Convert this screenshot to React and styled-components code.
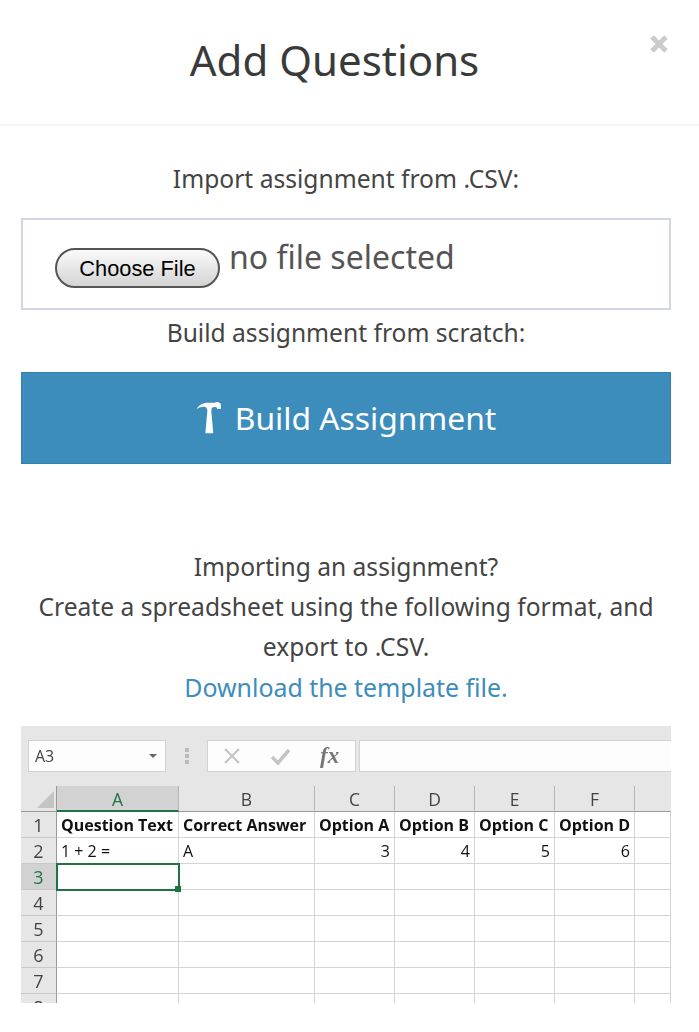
import React from 'react';
import styled, { createGlobalStyle } from 'styled-components';

const GlobalStyle = createGlobalStyle`
    html, body {
        margin: 0;
        padding: 0;
        background: #fff;
    }
    * {
        box-sizing: border-box;
    }
`;

const Modal = styled.div`
    width: 699px;
    height: 1032px;
    overflow: hidden;
    font-family: "Noto Sans", "Open Sans", sans-serif;
    color: #444;
`;

const Header = styled.header`
    position: relative;
    height: 126px;
    border-bottom: 2px solid #f4f4f4;
    padding: 30px 30px 0 0;
    text-align: center;
`;

const Title = styled.h1`
    margin: 0;
    font-size: 42px;
    line-height: 60px;
    font-weight: 400;
    color: #3a3a3a;
`;

const Close = styled.span`
    position: absolute;
    top: 34px;
    right: 30px;
    width: 20px;
    height: 20px;
    color: #ccc;
`;

const Body = styled.div`
    padding: 33px 28px 0 21px;
    display: flex;
    flex-direction: column;
`;

const Label = styled.p`
    margin: 0;
    text-align: center;
    font-size: ${p => p.$link ? '24.9px' : '24.6px'};
    line-height: 40px;
    color: ${p => p.$link ? '#3c8dbc' : '#444'};
`;

const FileBox = styled.div`
    margin: 19px 0 3px;
    height: 92px;
    border: 2px solid #d2d6e3;
    padding: 15px 0 0 32px;
    display: flex;
    align-items: flex-start;
    gap: 9px;
`;

const ChooseButton = styled.div`
    margin-top: 13px;
    width: 165px;
    height: 40px;
    border: 2px solid #555;
    border-radius: 20px;
    background: linear-gradient(#fafafa, #d4d4d4);
    color: #000;
    font-family: "Liberation Sans", Arial, sans-serif;
    font-size: 21.8px;
    line-height: 38px;
    text-align: center;
`;

const NoFile = styled.span`
    font-size: 32px;
    line-height: 44px;
    color: #555;
`;

const BuildButton = styled.div`
    margin-top: 19px;
    height: 92px;
    padding-bottom: 2px;
    background: #3c8dbc;
    border: 1px solid #367fa9;
    color: #fff;
    display: flex;
    align-items: center;
    justify-content: center;
    gap: 14px;
    font-size: 31.8px;
`;

const Intro = styled.div`
    margin-top: 83px;
`;

const Sheet = styled.div`
    margin-top: 19px;
    height: 277px;
    overflow: hidden;
    background: #e6e6e6;
    font-family: "Open Sans", "Noto Sans", sans-serif;
    color: #222;
    filter: blur(0.3px);
`;

const FormulaBar = styled.div`
    height: 60px;
    padding: 14px 0 14px 7px;
    display: flex;
    align-items: stretch;
`;

const InputBox = styled.div`
    background: #fdfdfd;
    border: 1px solid #d2d2d2;
    display: flex;
    align-items: center;
`;

const NameBox = styled(InputBox)`
    width: 138px;
    padding: 0 8px 0 6px;
    justify-content: space-between;
    font-size: 16px;
    color: #444;
`;

const Caret = styled.i`
    width: 0;
    height: 0;
    border-left: 4px solid transparent;
    border-right: 4px solid transparent;
    border-top: 4px solid #666;
`;

const Dots = styled.div`
    width: 41px;
    display: flex;
    flex-direction: column;
    align-items: center;
    justify-content: center;
    gap: 2px;
    i {
        width: 4px;
        height: 4px;
        background: #bbb;
    }
`;

const FnBox = styled(InputBox)`
    width: 149px;
    padding-left: 15px;
    gap: 30px;
    color: #c4c4c4;
`;

const Fx = styled.span`
    font-family: "Liberation Serif", serif;
    font-style: italic;
    font-weight: 700;
    font-size: 23px;
    color: #777;
`;

const FormulaInput = styled(InputBox)`
    flex: 1;
    margin-left: 3px;
    border-right: 0;
`;

const Grid = styled.div`
    display: grid;
    grid-template-columns: 36px 122px 136px 80px 80px 80px 80px 1fr;
    grid-auto-rows: 26px;
`;

const Corner = styled.div`
    background: #e6e6e6;
    border-bottom: 1px solid #9a9a9a;
    border-right: 1px solid #9a9a9a;
    position: relative;
    &::after {
        content: "";
        position: absolute;
        right: 2px;
        bottom: 3px;
        border-style: solid;
        border-width: 0 0 17px 17px;
        border-color: transparent transparent #c4c4c4 transparent;
    }
`;

const ColHead = styled.div`
    background: ${p => p.$active ? '#d2d2d2' : '#e6e6e6'};
    border-right: 1px solid ${p => p.$last ? 'transparent' : '#b5b5b5'};
    border-bottom: ${p => p.$active ? '2px solid #217346' : '1px solid #9a9a9a'};
    color: ${p => p.$active ? '#217346' : '#444'};
    font-size: 17.5px;
    line-height: 26px;
    text-align: center;
`;

const RowHead = styled.div`
    background: ${p => p.$active ? '#d2d2d2' : '#e6e6e6'};
    border-right: 1px solid #9a9a9a;
    border-bottom: 1px solid #c8c8c8;
    color: ${p => p.$active ? '#217346' : '#444'};
    font-size: 18px;
    line-height: 26px;
    text-align: center;
`;

const Cell = styled.div`
    position: relative;
    background: #fff;
    border-right: 1px solid #d4d4d4;
    border-bottom: 1px solid #d4d4d4;
    padding: 0 4px;
    font-size: 16px;
    line-height: 26px;
    font-weight: ${p => p.$bold ? 700 : 400};
    color: #111;
    text-align: ${p => p.$num ? 'right' : 'left'};
    white-space: nowrap;
    overflow: ${p => p.$selected ? 'visible' : 'hidden'};
    ${p => p.$selected && `
        z-index: 1;
        outline: 2px solid #217346;
        outline-offset: -1px;
        &::after {
            content: "";
            position: absolute;
            right: -3px;
            bottom: -3px;
            width: 6px;
            height: 6px;
            background: #217346;
        }
    `}
`;

const COLS = ['A', 'B', 'C', 'D', 'E', 'F'];
const HEADINGS = ['Question Text', 'Correct Answer', 'Option A', 'Option B', 'Option C', 'Option D', ''];
const VALUES = [['1 + 2 =', false], ['A', false], ['3', true], ['4', true], ['5', true], ['6', true], ['', false]];
const EMPTY_ROWS = [3, 4, 5, 6, 7, 8];

const Hammer = () => (
    <svg width="25" height="33" viewBox="0 0 75 100" fill="#fff">
        <path d="M1 26 C7 12 20 5 36 5 L58 5 L60 3 L66 3 L75 8 L75 24 L64 24 L61 18 L50 19 C47 22 46 26 46 30 L52 98 L28 98 L34 30 C34 24 32 20 28 18 C18 16 8 19 1 26 Z" />
    </svg>
);

const App = () => {
    return (
        <Modal>
            <GlobalStyle />
            <Header>
                <Title>Add Questions</Title>
                <Close>
                    <svg width="20" height="20" viewBox="0 0 20 20">
                        <path d="M3 3 L17 17 M17 3 L3 17" stroke="currentColor" strokeWidth="5" />
                    </svg>
                </Close>
            </Header>
            <Body>
                <Label>Import assignment from .CSV:</Label>
                <FileBox>
                    <ChooseButton>Choose File</ChooseButton>
                    <NoFile>no file selected</NoFile>
                </FileBox>
                <Label>Build assignment from scratch:</Label>
                <BuildButton><Hammer />Build Assignment</BuildButton>
                <Intro>
                    <Label>Importing an assignment?</Label>
                    <Label>Create a spreadsheet using the following format, and export to .CSV.</Label>
                    <Label $link>Download the template file.</Label>
                </Intro>
                <Sheet>
                    <FormulaBar>
                        <NameBox>A3<Caret /></NameBox>
                        <Dots><i /><i /><i /></Dots>
                        <FnBox>
                            <svg width="18" height="18" viewBox="0 0 18 18">
                                <path d="M2 2 L16 16 M16 2 L2 16" stroke="currentColor" strokeWidth="2" />
                            </svg>
                            <svg width="19" height="18" viewBox="0 0 19 18">
                                <path d="M1 10 L7 16 L18 3" stroke="currentColor" strokeWidth="3.5" fill="none" />
                            </svg>
                            <Fx>fx</Fx>
                        </FnBox>
                        <FormulaInput />
                    </FormulaBar>
                    <Grid>
                        <Corner />
                        {COLS.map((c, i) => <ColHead key={c} $active={i === 0}>{c}</ColHead>)}
                        <ColHead $last />
                        <RowHead>1</RowHead>
                        {HEADINGS.map((h, i) => <Cell key={i} $bold>{h}</Cell>)}
                        <RowHead>2</RowHead>
                        {VALUES.map(([v, num], i) => <Cell key={i} $num={num}>{v}</Cell>)}
                        {EMPTY_ROWS.map(r => (
                            <React.Fragment key={r}>
                                <RowHead $active={r === 3}>{r}</RowHead>
                                {HEADINGS.map((_, i) => <Cell key={i} $selected={r === 3 && i === 0} />)}
                            </React.Fragment>
                        ))}
                    </Grid>
                </Sheet>
            </Body>
        </Modal>
    );
};

export default App;
